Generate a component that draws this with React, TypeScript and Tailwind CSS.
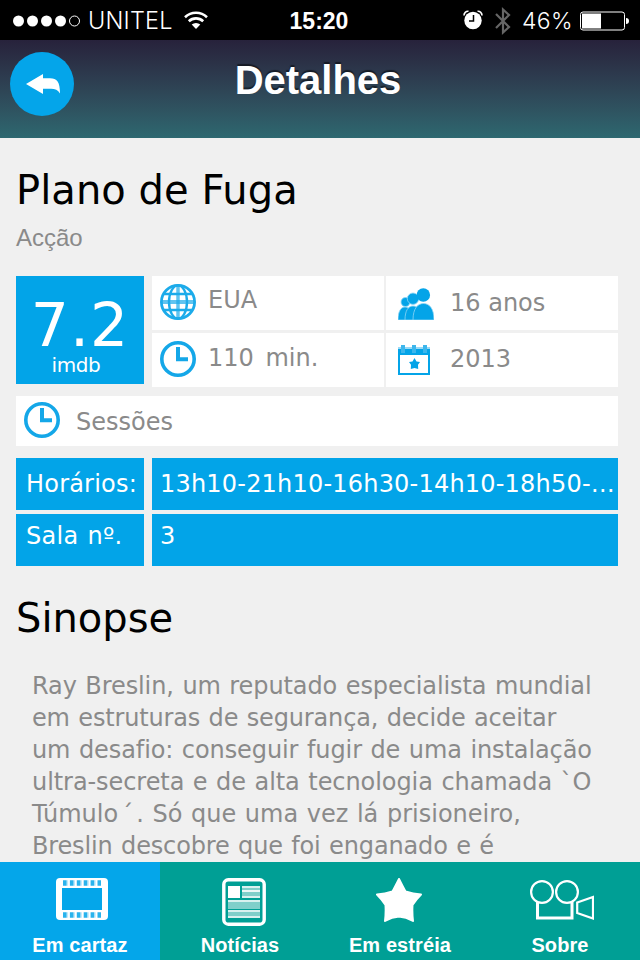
import { ReactNode } from "react";
import clsx from "clsx";

type TabProps = {
	label: string;
	icon: ReactNode;
	active?: boolean;
};

const synopsis = [
	{ text: "Ray Breslin, um reputado especialista mundial", className: "tracking-[-0.09px]" },
	{ text: "em estruturas de segurança, decide aceitar", className: "tracking-[-0.16px]" },
	{ text: "um desafio: conseguir fugir de uma instalação", className: "tracking-[-0.09px]" },
	{ text: "ultra-secreta e de alta tecnologia chamada `O", className: "tracking-[-0.07px]" },
	{ text: "Túmulo´. Só que uma vez lá prisioneiro,", className: "" },
	{ text: "Breslin descobre que foi enganado e é", className: "tracking-[-0.15px]" },
];

function StatusBar() {
	return (
		<div className="grid h-10 shrink-0 grid-cols-[1fr_auto_1fr] items-center bg-black text-white font-['Liberation_Sans',sans-serif]">
			<div className="flex items-center pl-[13px]">
				<svg width="68" height="12" viewBox="0 0 68 12" fill="#fff">
					<circle cx="5.5" cy="6" r="5.5" />
					<circle cx="19.5" cy="6" r="5.5" />
					<circle cx="33.5" cy="6" r="5.5" />
					<circle cx="47.5" cy="6" r="5.5" />
					<circle cx="61.5" cy="6" r="5" fill="none" stroke="#fff" />
				</svg>
				<span className="ml-[7px] w-[85px] pt-px text-[23.5px] font-light leading-10 tracking-[0.2px] font-['Inter',sans-serif]">
					UNITEL
				</span>
				<svg className="ml-[11px] -mt-px" width="24" height="18" viewBox="0 0 24 18" fill="none" stroke="#fff" strokeWidth="2.6">
					<path d="M1 6.2a16 16 0 0 1 22 0" />
					<path d="M4.8 10.2a10.5 10.5 0 0 1 14.4 0" />
					<path d="M12 18l-4.3-4.4a6.4 6.4 0 0 1 8.6 0z" fill="#fff" stroke="none" />
				</svg>
			</div>
			<span className="pr-0.5 pt-px text-[23px] font-bold leading-10">15:20</span>
			<div className="flex items-center justify-end pr-[10px]">
				<svg className="-mt-px" width="20" height="20" viewBox="0 0 20 20">
					<path d="M1 5.5A4 4 0 0 1 5.5 1.3M14.5 1.3A4 4 0 0 1 19 5.5" fill="none" stroke="#fff" strokeWidth="1.6" />
					<circle cx="10" cy="10.5" r="8.7" fill="#fff" />
					<path d="M10.5 5v6H6" fill="none" stroke="#000" strokeWidth="1.5" />
				</svg>
				<svg className="ml-3" width="16" height="28" viewBox="0 0 16 28" fill="none" stroke="#666" strokeWidth="2.2">
					<path d="M1 7l13 13-6 5.500V2.500L14 8 1 21" />
				</svg>
				<span className="ml-[11px] w-[50px] pt-px text-[23px] font-light leading-10 tracking-[0.3px] font-['Inter',sans-serif]">
					46%
				</span>
				<svg className="ml-[8px]" width="50" height="20" viewBox="0 0 50 20">
					<rect x=".5" y="1" width="44" height="18" rx="2.5" fill="none" stroke="#fff" />
					<rect x="2" y="2.5" width="19" height="15" fill="#fff" />
					<path d="M46 7q3 0 3 3t-3 3z" fill="#fff" />
				</svg>
			</div>
		</div>
	);
}

function GlobeIcon() {
	return (
		<svg width="36" height="36" viewBox="0 0 36 36" fill="none" stroke="#1cabea" strokeWidth="2.4">
			<circle cx="18" cy="18" r="16.6" strokeWidth="2.8" />
			<ellipse cx="18" cy="18" rx="9" ry="16.6" />
			<path d="M18 1v34" strokeWidth="3.5" opacity=".7" />
			<path d="M1 18h34" strokeWidth="4" opacity=".7" />
			<path d="M4 10h28M4 26h28" />
		</svg>
	);
}

function ClockIcon() {
	return (
		<svg width="36" height="36" viewBox="0 0 36 36" fill="none" stroke="#14a7e8">
			<circle cx="18" cy="18" r="16.2" strokeWidth="3.6" />
			<path d="M18 6v12.300h10" strokeWidth="4" />
		</svg>
	);
}

function PeopleIcon() {
	return (
		<svg width="36" height="32" viewBox="0 0 36 32" fill="#04a4e8" stroke="#8fd6f5" strokeWidth=".8">
			<circle cx="7.5" cy="14" r="4.5" />
			<path d="M0 32c0-9 3-13 7-13s7 4 7 13z" />
			<circle cx="15" cy="10.7" r="5.7" />
			<path d="M7 32c0-9 3-14 8-14s9 6 9 14z" />
			<circle cx="25.3" cy="7" r="6.8" stroke="none" />
			<path d="M15 32c0-12 5-16.500 10.500-16.500S36 20 36 32z" />
		</svg>
	);
}

function CalendarIcon() {
	return (
		<svg width="32" height="30" viewBox="0 0 32 30">
			<path d="M1 6v23h30V6" fill="none" stroke="#04a4e8" strokeWidth="2" />
			<path d="M0 4h32v6H0z" fill="#04a4e8" />
			<path d="M0 2h32v2H0z" fill="#9adaf6" />
			<path d="M5 0v8M16 0v8M27 0v8" stroke="#3db6ec" strokeWidth="4" />
			<path d="M16.500 13l2 3.500 3.500.5-2 2.700.2 4.300-3.700-1-3.700 1 .2-4.300-2-2.700 3.500-.5z" fill="#04a4e8" />
		</svg>
	);
}

function FilmIcon() {
	return (
		<svg className="translate-x-0.5" width="52" height="42" viewBox="0 0 52 42">
			<rect width="52" height="42" rx="4" fill="#fff" />
			<path d="M6 10h40v22H6z" fill="#04a6ea" />
			<path d="M7 5h38M7 37h38" stroke="#04a6ea" strokeWidth="5.5" strokeDasharray="3.600 3.300" opacity=".85" />
			<path d="M10.600 5h33M10.600 37h33" stroke="#04a6ea" strokeWidth="5.5" strokeDasharray="1.500 5.400" opacity=".25" />
		</svg>
	);
}

function NewsIcon() {
	return (
		<svg className="translate-x-1" width="44" height="48" viewBox="0 0 44 48" fill="none" stroke="#fff">
			<rect x="1.8" y="1.8" width="40.4" height="44.4" rx="4.5" strokeWidth="3.4" />
			<path d="M6 8h12v12H6z" fill="#fff" stroke="none" />
			<path d="M20 12h18M20 16h18M6 26h32M6 29h32M6 36h32" strokeWidth="4" opacity=".5" />
			<path d="M20 9h18M20 13h18M20 19h18M6 23h32M6 33h32M6 39h32" strokeWidth="2" opacity=".85" />
		</svg>
	);
}

function StarIcon() {
	return (
		<svg className="-translate-x-px" width="46" height="44" viewBox="0 0 46 44" fill="#fff" stroke="#fff" strokeWidth="2" strokeLinejoin="round">
			<path d="M23 1q4 8 6.500 12.500Q37 16 45 16.500q-5 5-8.500 10.500Q36 35 37 43q-7-4-14-4.500Q16 39 9 43q1-8 .5-16Q6 21.500 1 16.500 9 16 16.500 13.500 19 9 23 1z" />
		</svg>
	);
}

function CameraIcon() {
	return (
		<svg className="translate-x-0.5" width="64" height="42" viewBox="0 0 64 42" fill="none" stroke="#fff" strokeWidth="2.2">
			<circle cx="12" cy="14" r="10.9" />
			<circle cx="37" cy="14" r="10.9" />
			<path d="M7.500 24v16h34.500V24" strokeWidth="3" />
			<path d="M47.200 24.500L63 19v21.500L47.200 35z" />
		</svg>
	);
}

function Tab({ label, icon, active }: TabProps) {
	return (
		<div
			className={clsx(
				"flex flex-col items-center text-white",
				active ? "bg-[#04a6ea]" : "bg-[#009f95]"
			)}
		>
			<div className="flex h-[71px] w-full justify-center pt-4">{icon}</div>
			<span className="whitespace-nowrap text-[20px] font-bold leading-6 tracking-[0.1px] font-['Liberation_Sans',sans-serif]">
				{label}
			</span>
		</div>
	);
}

export default function App() {
	return (
		<div className="flex h-[960px] w-[640px] flex-col overflow-hidden bg-[#f0f0f0] font-['DejaVu_Sans',sans-serif]">
			<StatusBar />

			<header className="grid h-[98px] shrink-0 grid-cols-[1fr_auto_1fr] bg-linear-to-b from-[#27223b] to-[#2d6870]">
				<button className="ml-[10px] mt-3 flex size-16 items-center justify-center rounded-full bg-[#04a5ea] pl-0.5">
					<svg width="34" height="20" viewBox="0 0 34 20" fill="#fff">
						<path d="M0 10L17 0v4.300h7c7 0 10 3.700 10 15.200-2-3.500-5-4.800-9-4.800h-8V20z" />
					</svg>
				</button>
				<h1 className="pr-1 pt-4 text-[40px] font-bold leading-[48px] text-white [text-shadow:0_-2px_1px_rgba(0,0,0,0.5)] font-['Liberation_Sans',sans-serif]">
					Detalhes
				</h1>
			</header>

			<main className="min-h-0 flex-1 overflow-hidden whitespace-nowrap pl-4 pr-[22px] pt-7 text-[24px] leading-8 text-[#8a8a8a]">
				<h2 className="text-[40px] leading-[48px] tracking-[0.05px] text-black">Plano de Fuga</h2>
				<p className="mt-[10px] text-[24px] leading-7 font-['Liberation_Sans',sans-serif]">Acção</p>

				<div className="mt-6 flex h-[111px] gap-2">
					<div className="flex h-[108px] w-32 flex-col items-center bg-[#02a4e8] pt-5 text-white">
						<span className="text-[60px] leading-[58px] tracking-[1px]">7.2</span>
						<span className="pr-2 text-[20px] leading-[22px] tracking-[-0.4px]">imdb</span>
					</div>
					<div className="grid flex-1 grid-cols-2 grid-rows-2 gap-x-0.5 gap-y-[3px]">
						<div className="flex items-start bg-white pl-2 pt-2">
							<GlobeIcon />
							<span className="ml-3">EUA</span>
						</div>
						<div className="flex items-start bg-white pl-3 pt-[11px]">
							<div className="mt-px w-9">
								<PeopleIcon />
							</div>
							<span className="ml-4">16 anos</span>
						</div>
						<div className="flex items-start bg-white pl-2 pt-2">
							<ClockIcon />
							<span className="ml-3 mt-px whitespace-pre [word-spacing:-1.8px]">110  min.</span>
						</div>
						<div className="flex items-start bg-white pl-3 pt-[10px]">
							<div className="mt-0.5 w-9">
								<CalendarIcon />
							</div>
							<span className="ml-4">2013</span>
						</div>
					</div>
				</div>

				<div className="mt-[9px] flex h-[50px] items-start bg-white pl-2 pt-1.5">
					<ClockIcon />
					<span className="ml-4 mt-1">Sessões</span>
				</div>

				<div className="mt-3 grid grid-cols-[128px_466px] grid-rows-[52px_52px] gap-x-2 gap-y-1 text-white">
					<div className="bg-[#02a4e8] pl-[10px] pt-[10px] tracking-[0.2px]">Horários:</div>
					<div className="bg-[#02a4e8] pl-2 pt-[10px] tracking-[0.2px]">13h10-21h10-16h30-14h10-18h50-…</div>
					<div className="bg-[#02a4e8] pl-[10px] pt-1.5 tracking-[0.3px] [word-spacing:1px]">Sala nº.</div>
					<div className="bg-[#02a4e8] pl-2 pt-1.5">3</div>
				</div>

				<h2 className="mt-7 text-[40px] leading-[48px] text-black">Sinopse</h2>
				<div className="mt-7 pl-4 [word-spacing:1px]">
					{synopsis.map((line) => (
						<p key={line.text} className={line.className}>
							{line.text.split(/(´)/).map((part, index) => (
								<span key={index} className={part === "´" ? "ml-[3px] mr-[3px]" : ""}>
									{part}
								</span>
							))}
						</p>
					))}
				</div>
			</main>

			<nav className="grid h-[98px] shrink-0 grid-cols-4">
				<Tab label="Em cartaz" icon={<FilmIcon />} active />
				<Tab label="Notícias" icon={<NewsIcon />} />
				<Tab label="Em estréia" icon={<StarIcon />} />
				<Tab label="Sobre" icon={<CameraIcon />} />
			</nav>
		</div>
	);
}
